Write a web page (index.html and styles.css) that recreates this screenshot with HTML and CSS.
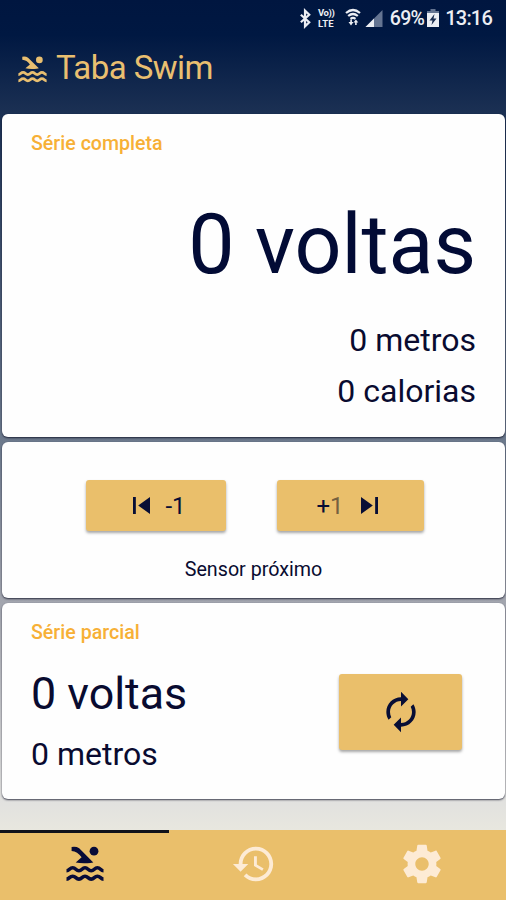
FILE: index.html
```html
<!DOCTYPE html>
<html lang="pt">
<head>
<meta charset="utf-8">
<title>Taba Swim</title>
<link rel="stylesheet" href="styles.css">
</head>
<body>
<svg class="symbols" aria-hidden="true">
  <symbol id="swim" viewBox="0 0 38 36">
    <path fill="currentColor" d="M5.600 1Q10 .2 13.200 2.200L27.300 16.400Q24 17.400 20 17.200Q14 17.400 9.700 16.400L15.600 11.200Q11.500 5.400 5.600 5Z"/>
    <circle fill="currentColor" cx="28" cy="5.200" r="4.400"/>
    <path fill="none" stroke="currentColor" stroke-width="3.600" d="M.5 24.700C3.500 24.700 3.500 21.800 6.700 21.800S9.800 24.700 12.900 24.700 16 21.800 19 21.800 22.100 24.700 25.200 24.700 28.300 21.800 31.400 21.800 34.500 24.700 37.500 24.700M.5 33.100C3.500 33.100 3.500 30.200 6.700 30.200S9.800 33.100 12.900 33.100 16 30.200 19 30.200 22.100 33.100 25.200 33.100 28.300 30.200 31.400 30.200 34.500 33.100 37.500 33.100"/>
  </symbol>
</svg>
<div class="app">
  <div class="status">
    <svg class="bt" viewBox="0 0 14 20"><path d="M2 6l9 8-4.500 4.500v-17L11 6l-9 8"/></svg>
    <span class="volte"><span>Vo))</span><span>LTE</span></span>
    <svg class="wifi" viewBox="0 0 16 20"><path d="M1 5Q8-1 15 5M3.200 8Q8 4 12.800 8M5.500 10.800Q8 9 10.500 10.800"/><path class="solid" d="M3.500 14h1.800v-2.500h1.600V14h1.600L6 17.500zM8.500 14.500l2.400-3 2.400 3h-1.600V17h-1.600v-2.500z"/></svg>
    <svg class="signal" viewBox="0 0 18 18"><path class="dim" d="M18 0v18H0z"/><path class="solid" d="M9 9v9H0z"/></svg>
    <span class="percent">69%</span>
    <svg class="battery" viewBox="0 0 12 18"><path class="dim" d="M3.500 0h5v2H12v5H0V2h3.500z"/><path class="solid" d="M0 4h12v14H0z"/><path class="bolt" d="M7.500 5L2.500 11.500h3L4.500 16l5-6.500h-3z"/></svg>
    <span class="clock">13:16</span>
  </div>
  <header class="header"><svg class="logo" viewBox="0 0 38 36" preserveAspectRatio="none"><use href="#swim" width="38" height="36"/></svg><h1>Taba Swim</h1></header>
  <main class="cards">
    <section class="card full">
      <h2>Série completa</h2>
      <p class="huge">0 voltas</p>
      <p class="line">0 metros</p>
      <p class="line">0 calorias</p>
    </section>
    <section class="card controls">
      <div class="buttons">
        <button class="btn minus"><svg viewBox="0 0 18 18"><path d="M0 0h3v18H0zM18 0v18L5.500 9z"/></svg><span>-1</span></button>
        <button class="btn plus"><span>+<span class="faded">1</span></span><svg viewBox="0 0 18 18"><path d="M15 0h3v18h-3zM0 0v18L12.500 9z"/></svg></button>
      </div>
      <p class="sensor">Sensor próximo</p>
    </section>
    <section class="card partial">
      <div>
        <h2>Série parcial</h2>
        <p class="big">0 voltas</p>
        <p class="line">0 metros</p>
      </div>
      <button class="btn reset" aria-label="Reiniciar"><svg viewBox="0 0 24 24"><path d="M12 6v3l4-4-4-4v3c-4.420 0-8 3.580-8 8 0 1.570.460 3.030 1.240 4.260L6.700 14.800c-.450-.830-.700-1.790-.700-2.800 0-3.310 2.690-6 6-6zm6.760 1.740L17.300 9.200c.440.840.700 1.790.700 2.800 0 3.310-2.690 6-6 6v-3l-4 4 4 4v-3c4.420 0 8-3.580 8-8 0-1.570-.460-3.030-1.240-4.260z"/></svg></button>
    </section>
  </main>
  <nav class="tabs">
    <a class="tab active"><svg class="swim"><use href="#swim"/></svg></a>
    <a class="tab"><svg class="history" viewBox="0 0 24 24"><path d="M13 3c-4.970 0-9 4.030-9 9H1l3.890 3.890.070.140L9 12H6c0-3.870 3.130-7 7-7s7 3.130 7 7-3.130 7-7 7c-1.930 0-3.680-.790-4.940-2.060l-1.420 1.420C8.270 19.990 10.510 21 13 21c4.970 0 9-4.030 9-9s-4.030-9-9-9zm-1 5v5l4.280 2.540.720-1.210-3.500-2.080V8H12z"/></svg></a>
    <a class="tab"><svg class="gear" viewBox="0 0 24 24"><path d="M19.430 12.980c.040-.320.070-.640.070-.980s-.030-.660-.070-.980l2.110-1.650c.190-.150.240-.420.120-.640l-2-3.460c-.120-.220-.390-.300-.610-.220l-2.490 1c-.520-.400-1.080-.730-1.690-.980l-.380-2.650C14.460 2.180 14.250 2 14 2h-4c-.250 0-.460.180-.490.420l-.380 2.650c-.610.250-1.170.590-1.690.980l-2.490-1c-.230-.090-.490 0-.610.220l-2 3.460c-.130.220-.070.490.120.640l2.110 1.650c-.040.320-.070.650-.070.980s.030.660.070.980l-2.110 1.650c-.190.150-.240.420-.120.640l2 3.460c.120.220.390.300.610.220l2.490-1c.520.400 1.080.730 1.690.980l.380 2.650c.030.240.240.420.490.420h4c.250 0 .460-.180.490-.420l.380-2.650c.610-.250 1.170-.590 1.690-.980l2.490 1c.230.090.490 0 .610-.220l2-3.460c.120-.220.070-.490-.120-.640l-2.110-1.650zM12 15.500c-1.930 0-3.500-1.570-3.500-3.500s1.570-3.500 3.500-3.500 3.500 1.570 3.500 3.500-1.570 3.500-3.500 3.500z"/></svg></a>
  </nav>
</div>
</body>
</html>
```
FILE: styles.css
```css
* { box-sizing: border-box; margin: 0; }
body { font-family: Roboto, sans-serif; color: #090b30; }
.symbols { display: none; }
svg { display: block; flex: none; fill: currentColor; overflow: visible; }
.app {
  height: 900px;
  display: flex;
  flex-direction: column;
  background: linear-gradient(#001640 0, #001842 35px, #1b3053 112px, #6c798c 438px, #a2a5ae 600px, #e1e1df 800px, #e8e7df 830px);
}
.status { height: 36px; display: flex; align-items: center; padding: 0 14px 0 299px; color: #eceef3; white-space: nowrap; }
.status .dim { fill: #647491; }
.status .bolt { fill: #1b2e50; }
.bt { width: 13px; height: 19px; fill: none; stroke: currentColor; stroke-width: 2.400; margin-right: 6px; }
.volte { width: 17px; display: flex; flex-direction: column; gap: 1px; font-weight: 700; font-size: 9.500px; line-height: 1; letter-spacing: -.4px; }
.volte span + span { letter-spacing: .1px; }
.wifi { width: 16px; height: 20px; margin-left: 10px; fill: none; stroke: currentColor; stroke-width: 2.200; }
.wifi .solid { fill: currentColor; stroke: none; }
.signal { width: 18px; height: 17px; margin-left: 4px; }
.percent { width: 36px; margin-left: 7px; font-size: 19.500px; font-weight: 500; letter-spacing: -.7px; }
.battery { width: 12px; height: 18px; margin-left: 2px; }
.clock { margin-left: 6px; font-size: 20px; font-weight: 500; letter-spacing: -.8px; }
.header { height: 78px; display: flex; align-items: center; padding: 0 0 14px 18px; gap: 9px; color: #e9bf70; }
.logo { width: 29px; height: 27px; margin-top: 2px; }
h1 { font-size: 33px; font-weight: 400; letter-spacing: -.55px; line-height: 40px; }
.cards { display: flex; flex-direction: column; gap: 5px; padding: 0 1px 0 2px; flex: 1; }
.card { background: #fefefe; border-radius: 6px; box-shadow: 0 1px 2px rgba(5, 8, 30, .75); }
h2 { font-size: 19.600px; font-weight: 500; line-height: 24px; color: #f7b036; }
.full { height: 323px; padding: 18px 29px 0; text-align: right; }
.full h2 { text-align: left; }
.huge { font-size: 82.500px; line-height: 100px; margin: 39px 0 20px; color: #020b35; }
.line { font-size: 32px; line-height: 51px; }
.controls { height: 156px; padding-top: 38px; }
.buttons { display: flex; gap: 51px; padding-left: 84px; }
.btn { display: flex; align-items: center; justify-content: center; border: 0; border-radius: 3px; background: #eabf6b; color: #080e35; font: 24px Roboto, sans-serif; box-shadow: 0 2px 3px rgba(0, 0, 0, .35); padding: 0; }
.minus { width: 140px; height: 51px; gap: 15px; padding-left: 7px; }
.plus { width: 147px; height: 51px; gap: 17px; padding-right: 7px; }
.minus svg, .plus svg { width: 17px; height: 17px; }
.faded { color: #75603f; }
.sensor { text-align: center; font-size: 19.700px; line-height: 24px; margin-top: 27px; }
.partial { height: 196px; padding: 18px 43px 0 29px; display: flex; justify-content: space-between; }
.big { font-size: 44.800px; line-height: 54px; margin: 22px 0 8px; }
.reset { width: 123px; height: 76px; margin-top: 53px; }
.reset svg { width: 44px; height: 44px; }
.tabs { height: 70px; display: flex; background: #eabf6b; }
.tab { flex: 1; display: flex; justify-content: center; padding-top: 13px; color: #fdebd5; border-top: 3px solid transparent; }
.active { border-color: #10121b; color: #080b38; }
.swim { width: 38px; height: 36px; margin-left: 1px; }
.history { width: 46px; height: 46px; margin: -5px 0 0 2px; }
.gear { width: 46px; height: 46px; margin: -5px 0 0 1px; }
```
